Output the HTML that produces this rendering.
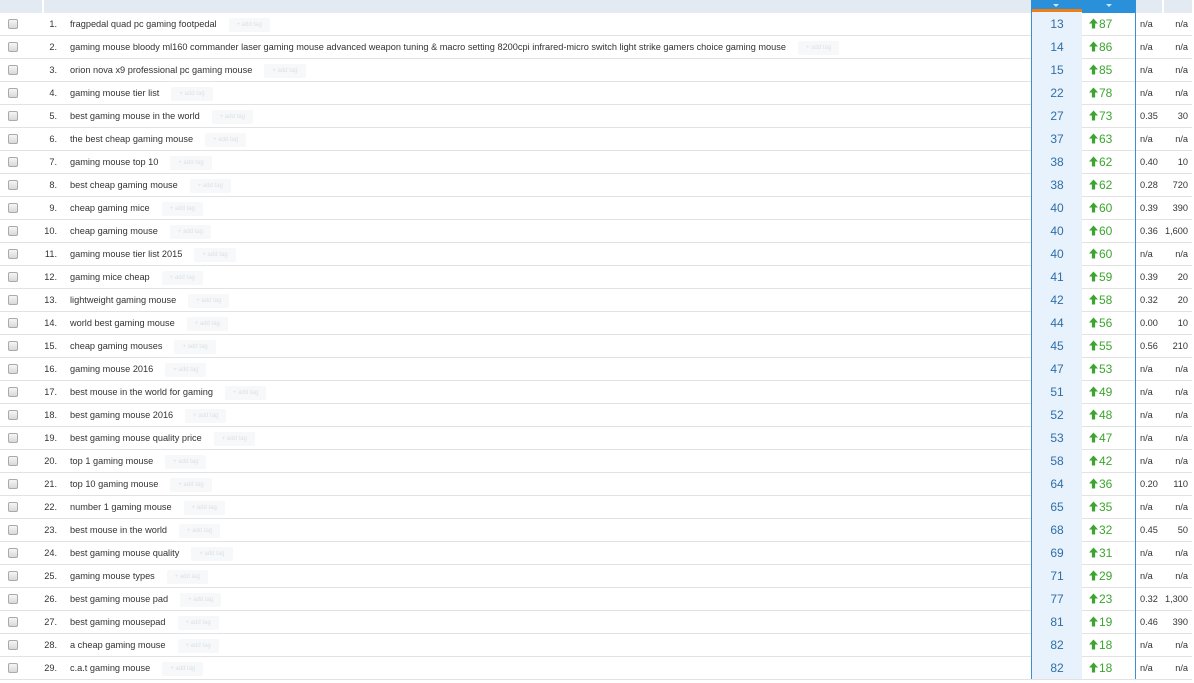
<!DOCTYPE html><html><head><meta charset="utf-8"><style>
*{margin:0;padding:0;box-sizing:border-box}
body{width:1194px;height:683px;overflow:hidden;background:#fff;font-family:"Liberation Sans",sans-serif;position:relative}
.hd{position:absolute;left:0;top:0;width:1192px;height:13px;background:#e3eaf1}
.hd .w1{position:absolute;left:42px;top:0;width:2px;height:13px;background:#fff}
.hd .w2{position:absolute;left:1162px;top:0;width:2px;height:13px;background:#fff}
.hd .bl{position:absolute;left:1031px;top:0;width:105px;height:13px;background:#2a90da}
.hd .or{position:absolute;left:1032px;top:9px;width:50px;height:4px;background:#f47d10}
.hd .t1,.hd .t2{position:absolute;top:4px;width:0;height:0;border-left:3px solid transparent;border-right:3px solid transparent;border-top:3px solid #cfe4f6}
.hd .t1{left:1053px}.hd .t2{left:1106px}
.rows{position:absolute;left:0;top:13px;width:1192px}
.r{position:relative;height:23px;border-bottom:1px solid #e2e2e2;font-size:9.2px;color:#333}
.r span{position:absolute;top:0;line-height:22px;white-space:nowrap}
.cb{position:absolute;left:8px;top:6px;width:10px;height:10px;border:1px solid #aaa;border-radius:2px;background:linear-gradient(#f6f6f6,#d8d8d8)}
.n{right:1135px}
.k{left:70px}
.k b{display:inline-block;font-weight:normal;margin-left:12px;background:#f6f8f9;color:#dde2e6;font-size:6px;line-height:14px;height:14px;padding:0 8px;vertical-align:middle;border-radius:2px}
.p{left:1031px;width:51px;height:23px;background:#e7f2fc;border-left:1px solid #3d8fd1;text-align:center;font-size:12px;color:#2f6ea6;top:-1px!important;line-height:24px!important}
.d{left:1082px;width:54px;height:23px;border-right:1px solid #3d8fd1;font-size:12px;color:#3da52f;top:-1px!important;line-height:25px!important;padding-left:7px}
.d svg{vertical-align:-1px;margin-right:1px}
.c{left:1140px}
.v{right:4px}
</style></head><body>
<svg width="0" height="0" style="position:absolute"><symbol id="a" viewBox="0 0 10 11"><path d="M5 0L0 5.5h3.2V11h3.6V5.5H10z" fill="#3da52f"/></symbol></svg>
<div class="hd"><div class="w1"></div><div class="w2"></div><div class="bl"></div><div class="or"></div><div class="t1"></div><div class="t2"></div></div>
<div class="rows">
<div class="r"><i class="cb"></i><span class="n">1.</span><span class="k">fragpedal quad pc gaming footpedal<b>+ add tag</b></span><span class="p">13</span><span class="d"><svg width="9" height="11"><use href="#a"/></svg>87</span><span class="c">n/a</span><span class="v">n/a</span></div>
<div class="r"><i class="cb"></i><span class="n">2.</span><span class="k">gaming mouse bloody ml160 commander laser gaming mouse advanced weapon tuning &amp; macro setting 8200cpi infrared-micro switch light strike gamers choice gaming mouse<b>+ add tag</b></span><span class="p">14</span><span class="d"><svg width="9" height="11"><use href="#a"/></svg>86</span><span class="c">n/a</span><span class="v">n/a</span></div>
<div class="r"><i class="cb"></i><span class="n">3.</span><span class="k">orion nova x9 professional pc gaming mouse<b>+ add tag</b></span><span class="p">15</span><span class="d"><svg width="9" height="11"><use href="#a"/></svg>85</span><span class="c">n/a</span><span class="v">n/a</span></div>
<div class="r"><i class="cb"></i><span class="n">4.</span><span class="k">gaming mouse tier list<b>+ add tag</b></span><span class="p">22</span><span class="d"><svg width="9" height="11"><use href="#a"/></svg>78</span><span class="c">n/a</span><span class="v">n/a</span></div>
<div class="r"><i class="cb"></i><span class="n">5.</span><span class="k">best gaming mouse in the world<b>+ add tag</b></span><span class="p">27</span><span class="d"><svg width="9" height="11"><use href="#a"/></svg>73</span><span class="c">0.35</span><span class="v">30</span></div>
<div class="r"><i class="cb"></i><span class="n">6.</span><span class="k">the best cheap gaming mouse<b>+ add tag</b></span><span class="p">37</span><span class="d"><svg width="9" height="11"><use href="#a"/></svg>63</span><span class="c">n/a</span><span class="v">n/a</span></div>
<div class="r"><i class="cb"></i><span class="n">7.</span><span class="k">gaming mouse top 10<b>+ add tag</b></span><span class="p">38</span><span class="d"><svg width="9" height="11"><use href="#a"/></svg>62</span><span class="c">0.40</span><span class="v">10</span></div>
<div class="r"><i class="cb"></i><span class="n">8.</span><span class="k">best cheap gaming mouse<b>+ add tag</b></span><span class="p">38</span><span class="d"><svg width="9" height="11"><use href="#a"/></svg>62</span><span class="c">0.28</span><span class="v">720</span></div>
<div class="r"><i class="cb"></i><span class="n">9.</span><span class="k">cheap gaming mice<b>+ add tag</b></span><span class="p">40</span><span class="d"><svg width="9" height="11"><use href="#a"/></svg>60</span><span class="c">0.39</span><span class="v">390</span></div>
<div class="r"><i class="cb"></i><span class="n">10.</span><span class="k">cheap gaming mouse<b>+ add tag</b></span><span class="p">40</span><span class="d"><svg width="9" height="11"><use href="#a"/></svg>60</span><span class="c">0.36</span><span class="v">1,600</span></div>
<div class="r"><i class="cb"></i><span class="n">11.</span><span class="k">gaming mouse tier list 2015<b>+ add tag</b></span><span class="p">40</span><span class="d"><svg width="9" height="11"><use href="#a"/></svg>60</span><span class="c">n/a</span><span class="v">n/a</span></div>
<div class="r"><i class="cb"></i><span class="n">12.</span><span class="k">gaming mice cheap<b>+ add tag</b></span><span class="p">41</span><span class="d"><svg width="9" height="11"><use href="#a"/></svg>59</span><span class="c">0.39</span><span class="v">20</span></div>
<div class="r"><i class="cb"></i><span class="n">13.</span><span class="k">lightweight gaming mouse<b>+ add tag</b></span><span class="p">42</span><span class="d"><svg width="9" height="11"><use href="#a"/></svg>58</span><span class="c">0.32</span><span class="v">20</span></div>
<div class="r"><i class="cb"></i><span class="n">14.</span><span class="k">world best gaming mouse<b>+ add tag</b></span><span class="p">44</span><span class="d"><svg width="9" height="11"><use href="#a"/></svg>56</span><span class="c">0.00</span><span class="v">10</span></div>
<div class="r"><i class="cb"></i><span class="n">15.</span><span class="k">cheap gaming mouses<b>+ add tag</b></span><span class="p">45</span><span class="d"><svg width="9" height="11"><use href="#a"/></svg>55</span><span class="c">0.56</span><span class="v">210</span></div>
<div class="r"><i class="cb"></i><span class="n">16.</span><span class="k">gaming mouse 2016<b>+ add tag</b></span><span class="p">47</span><span class="d"><svg width="9" height="11"><use href="#a"/></svg>53</span><span class="c">n/a</span><span class="v">n/a</span></div>
<div class="r"><i class="cb"></i><span class="n">17.</span><span class="k">best mouse in the world for gaming<b>+ add tag</b></span><span class="p">51</span><span class="d"><svg width="9" height="11"><use href="#a"/></svg>49</span><span class="c">n/a</span><span class="v">n/a</span></div>
<div class="r"><i class="cb"></i><span class="n">18.</span><span class="k">best gaming mouse 2016<b>+ add tag</b></span><span class="p">52</span><span class="d"><svg width="9" height="11"><use href="#a"/></svg>48</span><span class="c">n/a</span><span class="v">n/a</span></div>
<div class="r"><i class="cb"></i><span class="n">19.</span><span class="k">best gaming mouse quality price<b>+ add tag</b></span><span class="p">53</span><span class="d"><svg width="9" height="11"><use href="#a"/></svg>47</span><span class="c">n/a</span><span class="v">n/a</span></div>
<div class="r"><i class="cb"></i><span class="n">20.</span><span class="k">top 1 gaming mouse<b>+ add tag</b></span><span class="p">58</span><span class="d"><svg width="9" height="11"><use href="#a"/></svg>42</span><span class="c">n/a</span><span class="v">n/a</span></div>
<div class="r"><i class="cb"></i><span class="n">21.</span><span class="k">top 10 gaming mouse<b>+ add tag</b></span><span class="p">64</span><span class="d"><svg width="9" height="11"><use href="#a"/></svg>36</span><span class="c">0.20</span><span class="v">110</span></div>
<div class="r"><i class="cb"></i><span class="n">22.</span><span class="k">number 1 gaming mouse<b>+ add tag</b></span><span class="p">65</span><span class="d"><svg width="9" height="11"><use href="#a"/></svg>35</span><span class="c">n/a</span><span class="v">n/a</span></div>
<div class="r"><i class="cb"></i><span class="n">23.</span><span class="k">best mouse in the world<b>+ add tag</b></span><span class="p">68</span><span class="d"><svg width="9" height="11"><use href="#a"/></svg>32</span><span class="c">0.45</span><span class="v">50</span></div>
<div class="r"><i class="cb"></i><span class="n">24.</span><span class="k">best gaming mouse quality<b>+ add tag</b></span><span class="p">69</span><span class="d"><svg width="9" height="11"><use href="#a"/></svg>31</span><span class="c">n/a</span><span class="v">n/a</span></div>
<div class="r"><i class="cb"></i><span class="n">25.</span><span class="k">gaming mouse types<b>+ add tag</b></span><span class="p">71</span><span class="d"><svg width="9" height="11"><use href="#a"/></svg>29</span><span class="c">n/a</span><span class="v">n/a</span></div>
<div class="r"><i class="cb"></i><span class="n">26.</span><span class="k">best gaming mouse pad<b>+ add tag</b></span><span class="p">77</span><span class="d"><svg width="9" height="11"><use href="#a"/></svg>23</span><span class="c">0.32</span><span class="v">1,300</span></div>
<div class="r"><i class="cb"></i><span class="n">27.</span><span class="k">best gaming mousepad<b>+ add tag</b></span><span class="p">81</span><span class="d"><svg width="9" height="11"><use href="#a"/></svg>19</span><span class="c">0.46</span><span class="v">390</span></div>
<div class="r"><i class="cb"></i><span class="n">28.</span><span class="k">a cheap gaming mouse<b>+ add tag</b></span><span class="p">82</span><span class="d"><svg width="9" height="11"><use href="#a"/></svg>18</span><span class="c">n/a</span><span class="v">n/a</span></div>
<div class="r"><i class="cb"></i><span class="n">29.</span><span class="k">c.a.t gaming mouse<b>+ add tag</b></span><span class="p">82</span><span class="d"><svg width="9" height="11"><use href="#a"/></svg>18</span><span class="c">n/a</span><span class="v">n/a</span></div>
</div>
</body></html>
